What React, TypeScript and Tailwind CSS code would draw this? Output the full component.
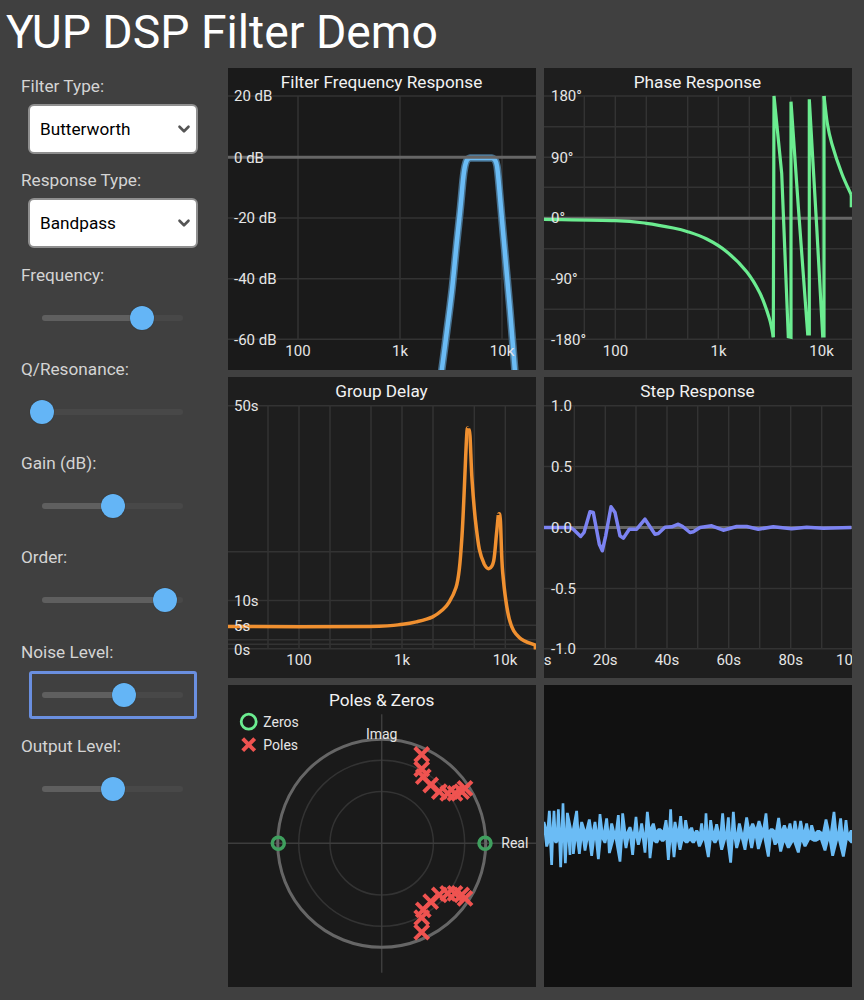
import { ChevronDown } from "lucide-react";
import type { ReactNode } from "react";

type Pt = [number, number];

// chart coordinates are page pixels; the zoomed crops were read at 3x
const fromCrop = (ox: number, oy: number, pts: Pt[]): Pt[] =>
  pts.map(([x, y]) => [ox + x / 3, oy + y / 3]);

const line = (pts: Pt[]) => "M" + pts.map(([x, y]) => `${x.toFixed(1)} ${y.toFixed(1)}`).join("L");

// catmull-rom through the points
const smooth = (pts: Pt[]) => {
  let d = `M${pts[0][0].toFixed(1)} ${pts[0][1].toFixed(1)}`;
  for (let i = 0; i < pts.length - 1; i++) {
    const p0 = pts[i - 1] ?? pts[i];
    const p1 = pts[i];
    const p2 = pts[i + 1];
    const p3 = pts[i + 2] ?? p2;
    const c1x = p1[0] + (p2[0] - p0[0]) / 6;
    const c1y = p1[1] + (p2[1] - p0[1]) / 6;
    const c2x = p2[0] - (p3[0] - p1[0]) / 6;
    const c2y = p2[1] - (p3[1] - p1[1]) / 6;
    d += `C${c1x.toFixed(1)} ${c1y.toFixed(1)} ${c2x.toFixed(1)} ${c2y.toFixed(1)} ${p2[0].toFixed(1)} ${p2[1].toFixed(1)}`;
  }
  return d;
};

const GRID = "#333333";
const AXIS = "#666666";
const LABEL = "#e6e6e6";

interface PanelProps {
  x: number;
  y: number;
  bg: string;
  children: ReactNode;
}

function Panel({ x, y, bg, children }: PanelProps) {
  return (
    <div className={bg}>
      <svg viewBox={`${x} ${y} 307.5 301.5`} className="block w-full h-full overflow-hidden">
        {children}
      </svg>
    </div>
  );
}

function Grid({ hs, vs, x0, x1, y0, y1 }: { hs: number[]; vs: number[]; x0: number; x1: number; y0: number; y1: number }) {
  return (
    <g stroke={GRID} strokeWidth={1.5}>
      {hs.map((h) => (
        <line key={h} x1={x0} x2={x1} y1={h} y2={h} />
      ))}
      {vs.map((v) => (
        <line key={v} x1={v} x2={v} y1={y0} y2={y1} />
      ))}
    </g>
  );
}

function Title({ x, y, children }: { x: number; y: number; children: string }) {
  return (
    <text x={x} y={y} textAnchor="middle" fontSize={17.2} fill="#f2f2f2">
      {children}
    </text>
  );
}

function Labels({
  items,
  anchor = "start",
  size = 15,
}: {
  items: [string, number, number][];
  anchor?: "start" | "middle";
  size?: number;
}) {
  return (
    <g fontSize={size} fill={LABEL} textAnchor={anchor}>
      {items.map(([t, x, y]) => (
        <text key={t} x={x} y={y}>
          {t}
        </text>
      ))}
    </g>
  );
}

function FrequencyPanel() {
  const d =
    smooth([[441.5, 372], [447, 330], [452, 290], [456, 250], [460, 212], [463, 180], [465, 166], [467, 160], [470, 158]]) +
    "L492 158" +
    smooth([[492, 158], [495, 160], [497, 166], [499, 185], [502, 220], [506, 265], [510, 310], [515, 372]]).replace("M492.0 158.0", "");
  return (
    <Panel x={228} y={68} bg="bg-[#1a1a1a]">
      <Grid hs={[96, 218, 278.7, 339.3]} vs={[298, 400, 502]} x0={228} x1={536} y0={96} y1={339.3} />
      <path d={d} fill="none" stroke="#46708e" strokeWidth={7.5} strokeLinejoin="round" />
      <path d={d} fill="none" stroke="#6bbcf5" strokeWidth={4.5} strokeLinejoin="round" />
      <line x1={228} x2={536} y1={157.3} y2={157.3} stroke={AXIS} strokeWidth={3} />
      <Title x={381.5} y={88}>Filter Frequency Response</Title>
      <Labels items={[["20 dB", 234, 101], ["0 dB", 234, 162.5], ["-20 dB", 234, 223], ["-40 dB", 234, 284], ["-60 dB", 234, 344.5]]} />
      <Labels anchor="middle" items={[["100", 298, 356], ["1k", 400, 356], ["10k", 502, 356]]} />
    </Panel>
  );
}

function PhasePanel() {
  const start = fromCrop(540, 60, [[0, 478], [226, 482], [319, 490], [400, 504], [443, 515], [500, 537], [560, 575], [620, 635], [660, 700], [688, 775], [700, 832]]);
  const tail = fromCrop(540, 60, [[852, 108], [862, 190], [875, 250], [905, 340], [934, 405]]);
  const saw = fromCrop(540, 60, [[700, 832], [702, 108], [725, 340], [745, 830], [753, 832], [753, 125], [775, 440], [803, 822], [808, 822], [808, 118], [830, 500], [848, 828], [852, 828], [852, 108]]);
  const end = fromCrop(540, 60, [[934, 405], [934, 442]]);
  return (
    <Panel x={544} y={68} bg="bg-[#1e1e1e]">
      <Grid
        hs={[96, 126.7, 157.3, 187.3, 248.7, 278.7, 309.3, 339.3]}
        vs={[584.3, 615.3, 646.3, 687.7, 718.3, 749.3, 790.7, 821.7]}
        x0={544}
        x1={852}
        y0={96}
        y1={339.3}
      />
      <line x1={544} x2={852} y1={218.3} y2={218.3} stroke={AXIS} strokeWidth={3} />
      <g fill="none" stroke="#6bec90" strokeWidth={3.2}>
        <path d={smooth(start)} />
        <path d={line(saw)} strokeLinejoin="miter" />
        <path d={smooth(tail)} />
        <path d={line(end)} />
      </g>
      <Title x={697.5} y={88}>Phase Response</Title>
      <Labels items={[["180°", 551, 101], ["90°", 551, 162.5], ["0°", 551, 223], ["-90°", 551, 284], ["-180°", 551, 344.5]]} />
      <Labels anchor="middle" items={[["100", 615.5, 356], ["1k", 718.5, 356], ["10k", 821.5, 356]]} />
    </Panel>
  );
}

function DelayPanel() {
  const rise = fromCrop(226, 372, [[0, 762], [430, 762], [530, 755], [575, 747], [620, 733], [650, 712], [670, 688], [690, 645], [700, 590], [708, 490], [714, 370], [719, 250], [723, 175], [727, 168]]);
  const fall = fromCrop(226, 372, [[727, 168], [732, 190], [738, 320], [748, 440], [760, 530], [775, 575], [790, 588], [803, 565], [811, 490], [817, 428]]);
  const last = fromCrop(226, 372, [[817, 428], [823, 440], [830, 600], [850, 740], [880, 795], [928, 818]]);
  return (
    <Panel x={228} y={376.5} bg="bg-[#1e1e1e]">
      <Grid
        hs={[405.3, 551.3, 600, 624.7, 639.3, 643.7, 648.3]}
        vs={[268, 299, 330, 371, 402, 433, 474.3, 505.3]}
        x0={228}
        x1={536}
        y0={405.3}
        y1={648.3}
      />
      <g fill="none" stroke="#f09030" strokeWidth={3.5} strokeLinejoin="round">
        <path d={smooth(rise)} />
        <path d={smooth(fall)} />
        <path d={smooth(last) + "L535.4 649"} />
      </g>
      <Title x={381.5} y={396}>Group Delay</Title>
      <Labels items={[["50s", 234, 410], ["10s", 234, 605], ["5s", 234, 630], ["0s", 234, 654]]} />
      <Labels anchor="middle" items={[["100", 299, 664.7], ["1k", 402, 664.7], ["10k", 505, 664.7]]} />
    </Panel>
  );
}

function StepPanel() {
  const pts = fromCrop(540, 372, [
    [12, 465], [90, 465], [100, 470], [122, 492], [132, 480], [150, 418], [160, 420], [178, 515], [187, 535], [197, 490],
    [213, 403], [225, 420], [240, 490], [250, 497], [268, 470], [290, 470], [315, 440], [345, 485], [355, 483], [375, 464],
    [395, 463], [415, 455], [428, 462], [450, 480], [460, 478], [480, 465], [515, 460], [550, 473], [590, 462], [620, 462],
    [655, 470], [700, 463], [755, 469], [800, 464], [850, 467], [934, 465],
  ]);
  return (
    <Panel x={544} y={376.5} bg="bg-[#1e1e1e]">
      <Grid
        hs={[405.3, 466, 588, 648.3]}
        vs={[574.3, 605.3, 636, 667, 697.7, 728.7, 759.7, 790.7, 821.7]}
        x0={544}
        x1={852}
        y0={405.3}
        y1={648.3}
      />
      <line x1={544} x2={852} y1={527} y2={527} stroke={AXIS} strokeWidth={3} />
      <path d={line(pts)} fill="none" stroke="#7c83f2" strokeWidth={3.5} strokeLinejoin="round" />
      <Title x={697.5} y={396}>Step Response</Title>
      <Labels items={[["1.0", 551, 410], ["0.5", 551, 471], ["0.0", 551, 532], ["-0.5", 551, 593], ["-1.0", 551, 653.7]]} />
      <Labels
        anchor="middle"
        items={[["0s", 543.5, 664.7], ["20s", 605.3, 664.7], ["40s", 667, 664.7], ["60s", 728.7, 664.7], ["80s", 790.7, 664.7], ["100s", 852.6, 664.7]]}
      />
    </Panel>
  );
}

const POLES: Pt[] = [
  [421.7, 754.5],
  [421.7, 769],
  [423.3, 776.7],
  [430.7, 785],
  [439.3, 791.7],
  [447.7, 793.3],
  [455, 793.3],
  [461.7, 791.7],
  [465, 788.3],
];

function Cross({ x, y, r = 7 }: { x: number; y: number; r?: number }) {
  return (
    <path
      d={`M${x - r} ${y - r}L${x + r} ${y + r}M${x + r} ${y - r}L${x - r} ${y + r}`}
      stroke="#ef5350"
      strokeWidth={4}
      fill="none"
    />
  );
}

function PolesPanel() {
  const cx = 381.7;
  const cy = 843.3;
  return (
    <Panel x={228} y={685} bg="bg-[#1a1a1a]">
      <g fill="none">
        <circle cx={cx} cy={cy} r={51.7} stroke={GRID} strokeWidth={1.5} />
        <circle cx={cx} cy={cy} r={83} stroke={GRID} strokeWidth={1.5} />
        <line x1={228} x2={536} y1={cy} y2={cy} stroke="#3d3d3d" strokeWidth={1.5} />
        <line x1={cx} x2={cx} y1={714.3} y2={972.7} stroke="#3d3d3d" strokeWidth={1.5} />
        <circle cx={cx} cy={cy} r={104} stroke={AXIS} strokeWidth={3} />
        <circle cx={278.3} cy={cy} r={6} stroke="#3f9f5e" strokeWidth={3.5} />
        <circle cx={485} cy={cy} r={6} stroke="#3f9f5e" strokeWidth={3.5} />
        <circle cx={248.7} cy={721.7} r={7.5} stroke="#6bec90" strokeWidth={2.8} />
      </g>
      {POLES.map(([x, y]) => (
        <g key={`${x}-${y}`}>
          <Cross x={x} y={y} />
          <Cross x={x} y={2 * cy - y} />
        </g>
      ))}
      <Cross x={248.7} y={744.7} r={6} />
      <Title x={381.7} y={705.5}>Poles & Zeros</Title>
      <Labels size={14} items={[["Zeros", 263.3, 726.5], ["Poles", 263.3, 749.7], ["Real", 501.3, 848]]} />
      <Labels size={14} anchor="middle" items={[["Imag", 381.7, 738.7]]} />
    </Panel>
  );
}

const TOPS: Pt[] = [
  [12, 125], [28, 92], [42, 92], [55, 88], [69, 70], [82, 98], [110, 92], [125, 125], [148, 118], [165, 125], [180, 102],
  [200, 115], [215, 130], [235, 105], [248, 100], [270, 140], [288, 110], [305, 130], [322, 95], [340, 130], [358, 145],
  [378, 120], [392, 88], [405, 125], [422, 108], [437, 120], [455, 142], [470, 150], [485, 130], [498, 100], [512, 120],
  [530, 132], [548, 100], [565, 112], [580, 95], [598, 130], [620, 112], [638, 130], [657, 122], [678, 100], [695, 145],
  [716, 113], [733, 135], [750, 130], [765, 122], [782, 122], [800, 130], [815, 135], [835, 150], [858, 118], [882, 95],
  [902, 115], [918, 120], [934, 150],
];

const BOTTOMS: Pt[] = [
  [20, 200], [35, 255], [48, 190], [62, 262], [76, 250], [90, 225], [100, 222], [118, 222], [135, 212], [155, 228],
  [175, 238], [195, 190], [208, 220], [240, 245], [258, 205], [278, 225], [295, 195], [315, 218], [330, 235], [350, 190],
  [368, 185], [385, 240], [402, 232], [420, 210], [440, 190], [460, 190], [478, 200], [505, 232], [525, 190], [545, 210],
  [572, 248], [590, 205], [615, 210], [635, 205], [655, 208], [685, 230], [705, 195], [722, 215], [745, 205], [775, 218],
  [795, 200], [825, 185], [855, 212], [878, 228], [910, 230], [936, 190],
];

// one edge of the wave: flat-topped spikes with notches towards the core
const edge = (peaks: Pt[], core: number, dir: 1 | -1): Pt[] => {
  const out: Pt[] = [];
  peaks.forEach(([x, y], i) => {
    out.push([x - 4, y], [x + 4, y]);
    const next = peaks[i + 1];
    if (next) {
      const notch = core + dir * ((i * 37) % 18);
      const deep = dir > 0 ? Math.max(notch, y + 6, next[1] + 6) : Math.min(notch, y - 6, next[1] - 6);
      out.push([(x + next[0]) / 2, deep]);
    }
  });
  return out;
};

function WavePanel() {
  const outline = [...edge(TOPS, 142, 1), ...edge(BOTTOMS, 188, -1).reverse()];
  return (
    <Panel x={544} y={685} bg="bg-[#111111]">
      <path d={line(fromCrop(540, 780, outline)) + "Z"} fill="#6bbcf5" />
    </Panel>
  );
}

function Field({ label, children }: { label: string; children: ReactNode }) {
  return (
    <div className="h-[94.3px] shrink-0">
      <div className="h-6 pl-[21px] text-[17.2px] leading-6 text-[#d4d4d4]">{label}</div>
      <div className="h-[62px] ml-[28px] w-[170px] flex items-center">{children}</div>
    </div>
  );
}

function Dropdown({ value, options }: { value: string; options: string[] }) {
  return (
    <div className="relative w-full">
      <select
        defaultValue={value}
        className="block w-full h-[50px] appearance-none rounded-md border-2 border-[#8f8f8f] bg-white pl-[10px] pt-px text-[17.2px] text-black outline-none"
      >
        {options.map((o) => (
          <option key={o}>{o}</option>
        ))}
      </select>
      <ChevronDown size={18} strokeWidth={3.5} className="absolute right-[5px] top-4 text-[#555555] pointer-events-none" />
    </div>
  );
}

function Slider({ value, focused }: { value: number; focused?: boolean }) {
  return (
    <div
      className={[
        "w-full h-12 flex items-center pl-[14px] pr-[15px]",
        focused ? "ml-px mr-px rounded-[3px] border-[3px] border-[#6a8fe0] !pl-[10px] !pr-[11px]" : "",
      ].join(" ")}
    >
      <div className="relative w-full h-1.5 rounded-full bg-[#484848]">
        <div className="h-full rounded-full bg-[#5f5f5f]" style={{ width: `${value * 100}%` }} />
        <div
          className="absolute top-1/2 w-6 h-6 -ml-3 -mt-3 rounded-full bg-[#64b5f6] shadow-[0_0_1px_#222]"
          style={{ left: `${value * 100}%` }}
        />
      </div>
    </div>
  );
}

export default function App() {
  return (
    <div className="w-[864px] h-[1000px] overflow-hidden bg-[#404040] font-['Roboto',sans-serif]">
      <h1 className="h-[68px] pl-[6px] pt-[6px] text-[46.3px] leading-[52px] font-normal text-white">YUP DSP Filter Demo</h1>
      <div className="flex">
        <aside className="w-[228px] shrink-0 pt-[6px] flex flex-col">
          <Field label="Filter Type:">
            <Dropdown value="Butterworth" options={["Butterworth", "Chebyshev", "Elliptic", "Bessel"]} />
          </Field>
          <Field label="Response Type:">
            <Dropdown value="Bandpass" options={["Lowpass", "Highpass", "Bandpass", "Bandstop"]} />
          </Field>
          <Field label="Frequency:">
            <Slider value={0.707} />
          </Field>
          <Field label="Q/Resonance:">
            <Slider value={0} />
          </Field>
          <Field label="Gain (dB):">
            <Slider value={0.503} />
          </Field>
          <Field label="Order:">
            <Slider value={0.872} />
          </Field>
          <Field label="Noise Level:">
            <Slider value={0.584} focused />
          </Field>
          <Field label="Output Level:">
            <Slider value={0.503} />
          </Field>
        </aside>
        <main className="grid grid-cols-[307.5px_307.5px] grid-rows-[301.5px_301.5px_301.5px] gap-x-[8.5px] gap-y-[7px]">
          <FrequencyPanel />
          <PhasePanel />
          <DelayPanel />
          <StepPanel />
          <PolesPanel />
          <WavePanel />
        </main>
      </div>
    </div>
  );
}
